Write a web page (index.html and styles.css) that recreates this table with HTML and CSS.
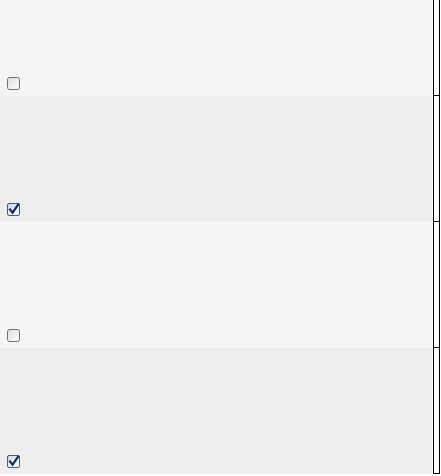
FILE: index.html
```html
<!DOCTYPE html>
<html>
<head>
<meta charset="utf-8">
<link rel="stylesheet" href="styles.css">
</head>
<body>
<div class="list">
  <div class="row odd first">
    <div class="cell">
      <svg class="cb" width="13" height="13" viewBox="0 0 13 13"><defs><linearGradient id="g1" x1="0" y1="0" x2="1" y2="1"><stop offset="0" stop-color="#dcdcdc"/><stop offset="1" stop-color="#ffffff"/></linearGradient></defs><rect x="0.5" y="0.5" width="12" height="12" rx="2" fill="url(#g1)" stroke="#6f6f6f"/></svg>
    </div>
    <div class="side"></div>
  </div>
  <div class="row even">
    <div class="cell">
      <svg class="cb" width="13" height="13" viewBox="0 0 13 13"><defs><linearGradient id="g2" x1="0" y1="0" x2="1" y2="1"><stop offset="0" stop-color="#c9d6e6"/><stop offset="1" stop-color="#ffffff"/></linearGradient></defs><rect x="0.5" y="0.5" width="12" height="12" rx="1.5" fill="url(#g2)" stroke="#4a5d78"/><path d="M3 6.5 L5.6 9.6 L11.2 1.6" fill="none" stroke="#1b2a57" stroke-width="2.2" stroke-linecap="square"/></svg>
    </div>
    <div class="side"></div>
  </div>
  <div class="row odd">
    <div class="cell">
      <svg class="cb" width="13" height="13" viewBox="0 0 13 13"><rect x="0.5" y="0.5" width="12" height="12" rx="2" fill="url(#g1)" stroke="#6f6f6f"/></svg>
    </div>
    <div class="side"></div>
  </div>
  <div class="row even">
    <div class="cell">
      <svg class="cb" width="13" height="13" viewBox="0 0 13 13"><rect x="0.5" y="0.5" width="12" height="12" rx="1.5" fill="url(#g2)" stroke="#4a5d78"/><path d="M3 6.5 L5.6 9.6 L11.2 1.6" fill="none" stroke="#1b2a57" stroke-width="2.2" stroke-linecap="square"/></svg>
    </div>
    <div class="side"></div>
  </div>
</div>
</body>
</html>
```

FILE: styles.css
```css
html, body {
  margin: 0;
  padding: 0;
  background: #ffffff;
  font-family: "Liberation Sans", Arial, sans-serif;
}
.list {
  display: flex;
  flex-direction: column;
  width: 441px;
}
.row {
  display: flex;
  height: 126px;
}
.row.first {
  height: 96px;
}
.cell {
  width: 432px;
  display: flex;
  align-items: flex-end;
  padding: 0 0 6px 7px;
  box-sizing: border-box;
}
.odd .cell { background: #f5f5f5; }
.even .cell { background: #eeeeee; }
.cb {
  display: block;
}
.side {
  width: 7px;
  margin-left: 1px;
  box-sizing: border-box;
  border-left: 1px solid #000;
  border-right: 1px solid #000;
  border-bottom: 1px solid #000;
  background: #fff;
}
```
